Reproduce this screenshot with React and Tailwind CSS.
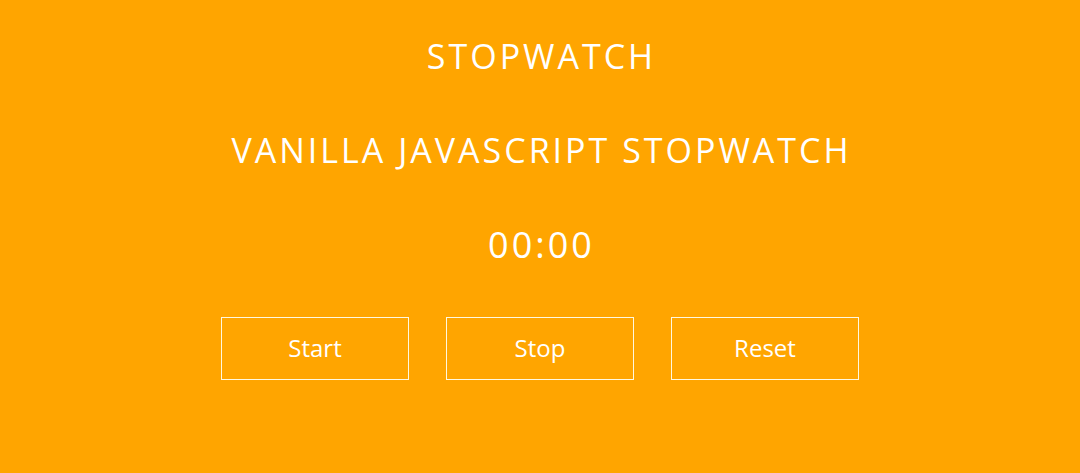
export default function App() {
  const font = { fontFamily: '"Open Sans", "Noto Sans", sans-serif' };
  return (
    <div className="w-[1080px] h-[473px] bg-[#ffa500] text-white flex flex-col items-center" style={font}>
      <h1 className="mt-[35px] text-[34px] leading-[42px] h-[42px] tracking-[3px] pl-[3px]">STOPWATCH</h1>
      <h2 className="mt-[52px] text-[34px] leading-[42px] h-[42px] tracking-[3px] pl-[3px]">VANILLA JAVASCRIPT STOPWATCH</h2>
      <p className="mt-[53px] text-[36px] leading-[42px] h-[42px] tracking-[3px] pl-[3px]">00:00</p>
      <div className="mt-[51px] flex gap-[37px]">
        {["Start", "Stop", "Reset"].map((t) => (
          <button key={t} className="w-[188px] h-[63px] border border-[#fff8e0] text-[24px] text-white bg-transparent pb-[2px]">
            {t}
          </button>
        ))}
      </div>
    </div>
  );
}
